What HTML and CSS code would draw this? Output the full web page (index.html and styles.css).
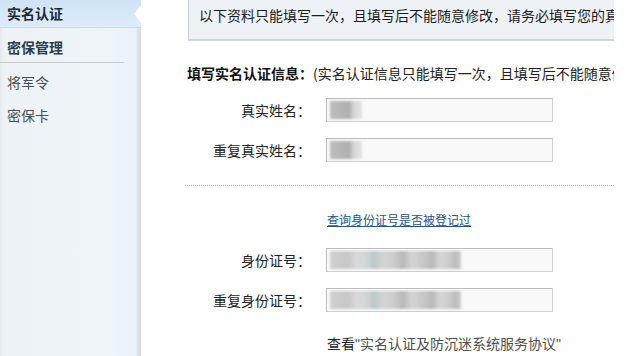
FILE: index.html
```html
<!DOCTYPE html>
<html lang="zh">
<head>
<meta charset="utf-8">
<title>实名认证</title>
<link rel="stylesheet" href="styles.css">
</head>
<body>
<div class="page">
  <aside class="side">
    <div class="item active">实名认证</div>
    <div class="item group">密保管理</div>
    <div class="divider"></div>
    <div class="item sub">将军令</div>
    <div class="item sub">密保卡</div>
  </aside>
  <main class="main">
    <div class="notice">以下资料只能填写一次，且填写后不能随意修改，请务必填写您的真实信息</div>
    <div class="heading"><b>填写实名认证信息：</b>(实名认证信息只能填写一次，且填写后不能随意修改)</div>
    <div class="row r1">
      <span class="label">真实姓名：</span>
      <span class="input"><span class="blur name"></span></span>
    </div>
    <div class="row r2">
      <span class="label">重复真实姓名：</span>
      <span class="input"><span class="blur name"></span></span>
    </div>
    <div class="dots"></div>
    <div class="linkrow"><a class="link" href="#">查询身份证号是否被登记过</a></div>
    <div class="row r3">
      <span class="label">身份证号：</span>
      <span class="input"><span class="blur id"></span></span>
    </div>
    <div class="row r4">
      <span class="label">重复身份证号：</span>
      <span class="input"><span class="blur id"></span></span>
    </div>
    <div class="agree">查看<span class="q">"</span><span class="proto">实名认证及防沉迷系统服务协议</span><span class="q">"</span></div>
  </main>
</div>
</body>
</html>
```
FILE: styles.css
```css
html, body {
  margin: 0;
  padding: 0;
  background: #fff;
}
body {
  font-family: "Noto Sans CJK SC", "Liberation Sans", sans-serif;
  font-size: 14px;
  color: #222;
}
.page {
  display: flex;
  width: 628px;
  height: 356px;
  overflow: hidden;
}
.side {
  width: 141px;
  flex: none;
  height: 356px;
  background: linear-gradient(to right, #e3e8ec 0, #edf2f6 3px, #eef4f8 80%, #e9f3fa 96%, #dde2ea 98%, #d6dbe4 100%);
}
.item {
  padding-left: 7px;
  line-height: 20px;
}
.item.active {
  position: relative;
  height: 28px;
  line-height: 27px;
  font-weight: bold;
  color: #1e2a36;
  background: linear-gradient(to bottom, #cfe3f6, #dfecf9);
  border-bottom: 1px solid #c5d9ec;
  box-sizing: border-box;
}
.item.active::after {
  content: "";
  position: absolute;
  right: 0;
  top: 5px;
  border-style: solid;
  border-width: 9px 7px 9px 0;
  border-color: transparent #fff transparent transparent;
}
.item.group {
  margin-top: 9px;
  font-weight: bold;
  color: #2e3c4c;
}
.divider {
  margin-top: 5px;
  width: 124px;
  height: 1px;
  background: #c6cbd0;
}
.item.sub {
  color: #4a4f55;
}
.divider + .item.sub {
  margin-top: 9px;
}
.item.sub + .item.sub {
  margin-top: 13px;
}
.main {
  width: 429px;
  margin-left: 44px;
  overflow: hidden;
  white-space: nowrap;
}
.notice {
  margin-left: 3px;
  height: 39px;
  line-height: 30px;
  padding-left: 10px;
  background: #eef2f7;
  border-left: 1px solid #c8cfd7;
  border-bottom: 2px solid #cfd5dc;
  overflow: hidden;
  color: #1c1c1c;
}
.heading {
  margin-top: 22px;
  line-height: 20px;
  margin-left: 2px;
}
.heading b {
  color: #111;
}
.row {
  display: flex;
  align-items: center;
  height: 24px;
}
.r1 { margin-top: 15px; }
.r2 { margin-top: 16px; }
.r3 { margin-top: 19px; }
.r4 { margin-top: 16px; }
.label {
  width: 126px;
  text-align: right;
  margin-right: 15px;
  flex: none;
}
.input {
  width: 227px;
  height: 24px;
  box-sizing: border-box;
  border: 1px solid #d0d0d0;
  border-top-color: #bdbdbd;
  border-left-color: #bdbdbd;
  background: #f9f9f9;
  padding: 2px 3px;
  display: flex;
}
.blur {
  display: block;
  height: 18px;
  filter: blur(1px);
}
.blur.name {
  width: 32px;
  background:
    linear-gradient(to right, #bdbdbd 0, #b0b0b0 60%, #d6d6d6 75%, #e4e4e4 100%);
}
.blur.id {
  width: 131px;
  background: linear-gradient(to right,
    #cfcfcf 0, #c8c8c8 14%, #d9d9d9 20%, #cfd6d6 28%, #bcc8c8 34%, #d4d4d4 40%,
    #cfcfcf 48%, #b8b8b8 56%, #d4d4d4 62%, #c9c9c9 70%, #b9b9b9 78%, #d6d6d6 84%,
    #cfcfcf 90%, #bcbcbc 96%, #d0d0d0 100%);
}
.dots {
  margin-top: 23px;
  height: 0;
  border-top: 1px dotted #b8b8b8;
}
.linkrow {
  margin-top: 24px;
  padding-left: 142px;
  line-height: 18px;
}
.link {
  font-size: 12px;
  color: #26548a;
  text-decoration: underline;
}
.agree {
  margin-top: 21px;
  padding-left: 142px;
  line-height: 20px;
  color: #222;
}
.q {
  font-family: "Liberation Sans", sans-serif;
  color: #555;
}
.proto {
  color: #4d4d4d;
}
```
